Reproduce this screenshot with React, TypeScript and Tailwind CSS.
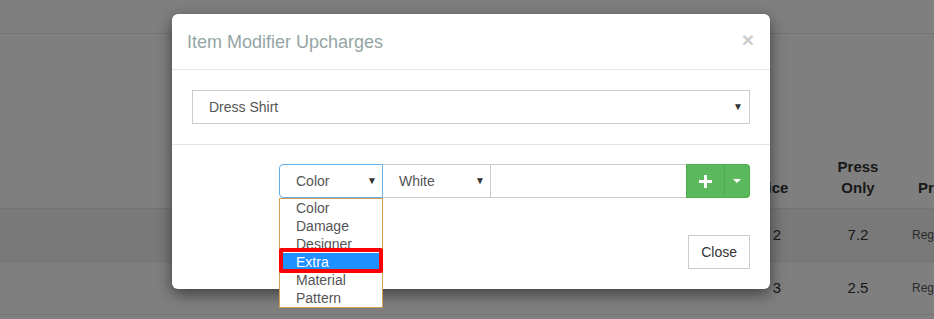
import React from 'react';

const options = ['Color', 'Damage', 'Designer', 'Extra', 'Material', 'Pattern'];

const Caret = () => <span className="text-[10px] text-[#333] leading-none">▼</span>;

const App: React.FC = () => {
  return (
    <div className="relative w-[934px] h-[319px] overflow-hidden bg-white font-['Liberation_Sans',Arial,sans-serif] text-[14px] text-[#333]">
      {/* Page behind the modal */}
      <div className="pt-[33px]">
        <div className="border-t border-[#e6e6e6] h-[175px] flex items-end pb-[10px] whitespace-nowrap">
          <div className="w-[735px] shrink-0" />
          <div className="w-[70px] shrink-0 text-center font-bold text-[15px] leading-[21px]">Price</div>
          <div className="w-[16px] shrink-0" />
          <div className="w-[74px] shrink-0 text-center font-bold text-[15px] leading-[21px]">Press<br />Only</div>
          <div className="pl-[23px] shrink-0 font-bold text-[15px] leading-[21px]">Price</div>
        </div>
        {[
          { p: '2', o: '7.2', bg: 'bg-[#f3f3f3]' },
          { p: '3', o: '2.5', bg: 'bg-white' }
        ].map((r, i) => (
          <div key={i} className={`border-t border-[#e6e6e6] h-[53px] flex items-center text-[15px] whitespace-nowrap ${r.bg}`}>
            <div className="w-[742px] shrink-0" />
            <div className="w-[70px] shrink-0 text-center">{r.p}</div>
            <div className="w-[9px] shrink-0" />
            <div className="w-[74px] shrink-0 text-center">{r.o}</div>
            <div className="pl-[17px] shrink-0 text-[12px] text-[#555]">Regular</div>
          </div>
        ))}
        <div className="border-t border-[#e6e6e6]" />
      </div>

      {/* Backdrop */}
      <div className="absolute inset-0 bg-black/50" />

      {/* Modal */}
      <div className="absolute left-[172px] top-[14px] w-[598px] bg-white rounded-[6px] shadow-[0_5px_15px_rgba(0,0,0,0.5)]">
        <div className="flex items-center justify-between px-[15px] h-[56px] border-b border-[#e5e5e5]">
          <h4 className="text-[18px] text-[#95a5a6] leading-[26px]">Item Modifier Upcharges</h4>
          <span className="text-[21px] font-bold text-[#cccccc] leading-none mr-[1px] -mt-[4px]">×</span>
        </div>

        <div className="p-5 border-b border-[#e5e5e5]">
          <div className="h-[34px] border border-[#cccccc] flex items-center justify-between pl-[16px] pr-[6px] text-[#555]">
            <span>Dress Shirt</span>
            <Caret />
          </div>
        </div>

        <div className="pt-[19px] pb-5 px-5 flex flex-col items-end">
          <div className="relative w-[471px] h-[34px] flex">
            <div className="w-[104px] h-full border border-[#66afe9] rounded-l-[4px] flex items-center justify-between pl-[16px] pr-[5px] text-[#555]">
              <span>Color</span>
              <Caret />
            </div>
            <div className="w-[108px] h-full border-y border-r border-[#cccccc] flex items-center justify-between pl-[16px] pr-[5px] text-[#555]">
              <span>White</span>
              <Caret />
            </div>
            <div className="flex-1 h-full border-y border-[#cccccc]" />
            <div className="w-[39px] h-full bg-[#5cb85c] border border-[#4cae4c] flex items-center justify-center">
              <svg width="13" height="13" viewBox="0 0 13 13">
                <path d="M5 0h3v5h5v3H8v5H5V8H0V5h5z" fill="#ffffff" />
              </svg>
            </div>
            <div className="w-[25px] h-full bg-[#5cb85c] border-y border-r border-[#4cae4c] rounded-r-[4px] flex items-center justify-center">
              <span className="border-x-[4px] border-x-transparent border-t-[4px] border-t-white" />
            </div>

            {/* Open option list */}
            <div className="absolute left-0 top-[34px] w-[104px] bg-white border border-[#d2a050] z-10">
              {options.map((o) =>
                o === 'Extra' ? (
                  <div key={o} className="h-[18px] leading-[18px] mx-[3px] pl-[13px] bg-[#1e90ff] text-white">
                    {o}
                  </div>
                ) : (
                  <div key={o} className="h-[18px] leading-[18px] pl-[16px] text-[#555]">
                    {o}
                  </div>
                )
              )}
              <div className="absolute left-[-1px] top-[49px] w-[104px] h-[25px] border-[4px] border-[#ff0000] rounded-[2px]" />
            </div>
          </div>

          <button className="mt-[37px] h-[34px] px-[12px] border border-[#cccccc] bg-white text-[#333] text-[14px]">
            Close
          </button>
        </div>
      </div>
    </div>
  );
};

export default App;
